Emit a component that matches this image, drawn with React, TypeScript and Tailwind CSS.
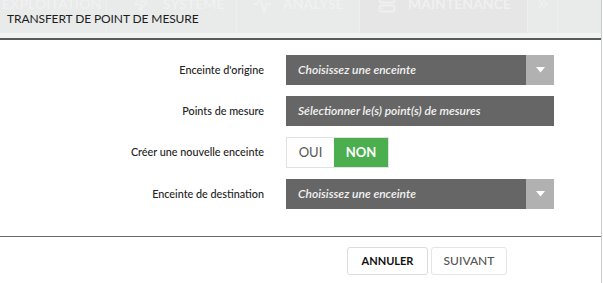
import { Zap, Activity, Server, ChevronsRight } from "lucide-react";

const Field = ({ label, children }: { label: string; children: React.ReactNode }) => (
	<div className="flex items-center">
		<div className="w-[264px] text-right text-[10.8px] font-medium text-[#222]">{label}</div>
		<div className="ml-[22px]">{children}</div>
	</div>
);

const SelectBox = ({ text, arrow = true }: { text: string; arrow?: boolean }) => (
	<div className="flex h-[30px] w-[268px] bg-[#666666]">
		<div className="flex flex-1 items-center pl-[12px] text-[12px] font-semibold italic text-[#f2f2f2]">{text}</div>
		{arrow && (
			<div className="flex w-[28px] items-center justify-center bg-[#b1b1b1]">
				<svg width="9" height="6" viewBox="0 0 9 6">
					<path d="M0 0 H9 L4.5 5.5 Z" fill="#ffffff" />
				</svg>
			</div>
		)}
	</div>
);

export default function App() {
	return (
		<div className="h-[283px] w-[603px] overflow-hidden bg-white font-['Lato','Liberation_Sans',sans-serif]">
			<div className="flex h-[283px] w-[602px] flex-col border-r border-[#c6ccd4]">
				<div className="relative h-[38px] overflow-hidden bg-[#f1f2f2]">
					{/* faded navigation bar behind the modal header */}
					<div className="absolute left-0 top-0 flex h-[33px] w-full items-start bg-[#e9eaea] text-[14px] font-bold text-[#f0f0f0]">
						<div className="flex h-[33px] w-[107px] border-r border-[#eeeeee] pl-[2px]">
							<span className="-mt-[7px]">EXPLOITATION</span>
						</div>
						<div className="flex h-[33px] w-[130px] gap-[10px] border-r border-[#eeeeee] pl-[26px]">
							<Zap size={16} className="-mt-[5px]" strokeWidth={2.5} />
							<span className="-mt-[7px] ml-[4px]">SYSTEME</span>
						</div>
						<div className="flex h-[33px] w-[123px] border-r border-[#eeeeee] pl-[16px]">
							<Activity size={18} className="-mt-[5px]" strokeWidth={2.5} />
							<span className="-mt-[7px] ml-[12px]">ANALYSE</span>
						</div>
						<div className="flex h-[33px] w-[167px] bg-[#e6e6e6] pl-[18px]">
							<Server size={18} className="-mt-[5px]" strokeWidth={2.5} />
							<span className="-mt-[7px] ml-[12px]">MAINTENANCE</span>
						</div>
						<div className="flex h-[33px] w-[31px] justify-center border-x border-[#eeeeee]">
							<ChevronsRight size={16} className="-mt-[4px]" strokeWidth={2} />
						</div>
					</div>
					<div className="relative pl-[7px] pt-[10px] text-[12px] tracking-[-0.1px] text-[#1d1d1d]">TRANSFERT DE POINT DE MESURE</div>
				</div>
				<div className="h-[2px] bg-[#5a5a5a]"></div>
				<div className="flex h-[196px] flex-col gap-[11px] pt-[15px]">
					<Field label="Enceinte d'origine">
						<SelectBox text="Choisissez une enceinte" />
					</Field>
					<Field label="Points de mesure">
						<SelectBox text="Sélectionner le(s) point(s) de mesures" arrow={false} />
					</Field>
					<Field label="Créer une nouvelle enceinte">
						<div className="flex h-[31px] border border-[#e2e2e2]">
							<div className="flex w-[47px] items-center justify-center bg-white text-[13px] text-[#555]">OUI</div>
							<div className="flex w-[54px] items-center justify-center bg-[#4bae4f] text-[13px] font-bold text-white">NON</div>
						</div>
					</Field>
					<Field label="Enceinte de destination">
						<SelectBox text="Choisissez une enceinte" />
					</Field>
				</div>
				<div className="h-[1px] bg-[#6a6a6a]"></div>
				<div className="flex gap-[3px] pl-[347px] pt-[10px]">
					<button className="h-[28px] w-[81px] rounded-[3px] border border-[#dcdcdc] bg-white text-[11px] font-bold text-[#111]">ANNULER</button>
					<button className="h-[28px] w-[76px] rounded-[3px] border border-[#e4e4e4] bg-white text-[12px] font-medium text-[#555]">SUIVANT</button>
				</div>
			</div>
		</div>
	);
}
